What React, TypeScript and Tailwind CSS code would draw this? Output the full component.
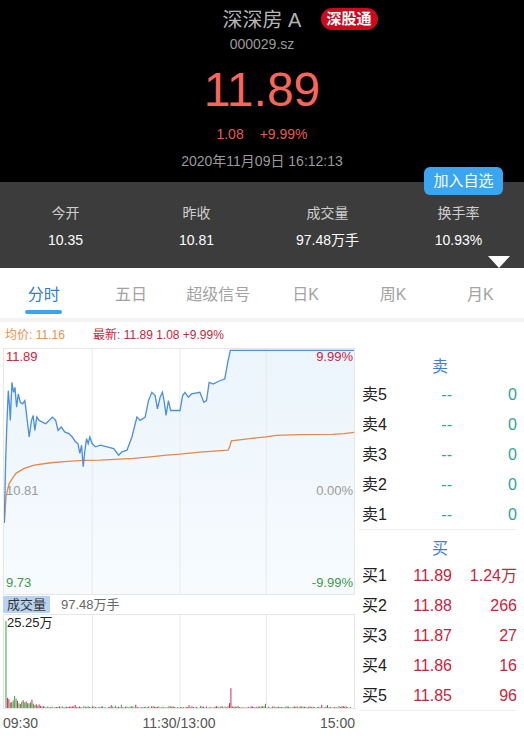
import React from 'react'

const FONT = { fontFamily: '"Liberation Sans", "Noto Sans CJK SC", sans-serif' }

const stats = [
  { label: '今开', value: '10.35' },
  { label: '昨收', value: '10.81' },
  { label: '成交量', value: '97.48万手' },
  { label: '换手率', value: '10.93%' },
]

const tabs = ['分时', '五日', '超级信号', '日K', '周K', '月K']

const sells = ['卖5', '卖4', '卖3', '卖2', '卖1']

const buys = [
  { label: '买1', price: '11.89', vol: '1.24万' },
  { label: '买2', price: '11.88', vol: '266' },
  { label: '买3', price: '11.87', vol: '27' },
  { label: '买4', price: '11.86', vol: '16' },
  { label: '买5', price: '11.85', vol: '96' },
]

// price line traced in 3x coordinates of the chart region
const pricePts: [number, number][] = [
  [10, 610], [14, 420], [18, 300], [22, 210], [26, 260], [28, 300], [33, 185], [36, 205], [38, 215], [42, 200],
  [47, 260], [52, 220], [58, 245], [65, 250], [72, 240], [78, 290], [85, 350], [92, 300], [97, 285],
  [102, 330], [108, 290], [115, 300], [125, 305], [135, 310], [145, 300], [155, 290], [165, 300],
  [172, 330], [182, 320], [192, 335], [205, 340], [215, 350], [225, 365], [232, 370], [238, 400],
  [243, 375], [248, 440], [252, 400], [258, 355], [263, 370], [268, 350], [275, 370], [285, 380],
  [300, 375], [320, 380], [340, 385], [355, 405], [365, 395], [380, 390], [395, 350], [410, 290],
  [420, 300], [435, 290], [445, 240], [455, 215], [465, 225], [472, 265], [480, 230], [487, 215],
  [492, 240], [498, 285], [505, 240], [512, 270], [540, 270], [548, 225], [555, 215], [565, 230],
  [575, 220], [600, 215], [612, 245], [620, 240], [628, 185], [640, 190], [660, 180], [675, 175],
  [685, 120], [692, 88], [1065, 88],
]

const avgPts: [number, number][] = [
  [10, 610], [15, 530], [25, 490], [45, 460], [70, 445], [100, 435], [150, 428], [200, 424],
  [250, 421], [300, 420], [400, 415], [450, 410], [500, 405], [540, 402], [600, 396], [685, 390],
  [690, 380], [695, 362], [750, 355], [800, 350], [830, 345], [900, 343], [1000, 342], [1035, 340],
  [1065, 336],
]

const toPts = (pts: [number, number][]) => pts.map(([x, y]) => `${x},${y}`).join(' ')

// deterministic volume bars
function makeBars() {
  const bars: { x: number; h: number; up: boolean }[] = []
  let seed = 7
  const rnd = () => {
    seed = (seed * 9301 + 49297) % 233280
    return seed / 233280
  }
  for (let i = 0; i < 240; i++) {
    const x = 1.5 + i * 1.45
    let h = rnd() * 1.6 + 0.3
    if (i < 30) h = Math.max(h, (30 - i) * 0.35 * (0.5 + rnd()))
    if (i === 0) h = 88
    if (i === 156) h = 20
    if (i === 155) h = 5
    if (rnd() > 0.93) h += rnd() * 3
    let up = rnd() > 0.45
    if (i === 0) up = false
    if (i === 155 || i === 156) up = true
    bars.push({ x, h, up })
  }
  return bars
}

const bars = makeBars()

export default function App() {
  return (
    <div className="w-[524px] h-[737px] overflow-hidden bg-white" style={FONT}>
      {/* Header */}
      <div className="relative bg-black h-[182px] flex flex-col items-center pt-[8px]">
        <div className="h-[24px] flex items-center relative">
          <span className="text-[20px] leading-[24px] text-[#b4b4b4]">深深房 A</span>
          <span className="absolute left-[98px] top-[0px] h-[22px] px-[6px] rounded-full bg-[#cc0a1e] text-white text-[15px] font-bold leading-[22px] whitespace-nowrap">
            深股通
          </span>
        </div>
        <div className="h-[24px] text-[14px] leading-[24px] text-[#9a9a9a]">000029.sz</div>
        <div className="h-[68px] text-[48px] leading-[68px] text-[#f6665a]">11.89</div>
        <div className="h-[20px] flex gap-[16px] text-[14px] leading-[20px] text-[#e65c4f]">
          <span>1.08</span>
          <span>+9.99%</span>
        </div>
        <div className="mt-[7px] h-[20px] text-[14px] leading-[20px] text-[#9a9a9a]">2020年11月09日 16:12:13</div>
        <button className="absolute right-[21px] top-[167px] w-[79px] h-[28px] rounded-[6px] bg-[#3aa5f1] text-white text-[15px] leading-[28px] z-10">
          加入自选
        </button>
      </div>

      {/* Stats */}
      <div className="relative bg-[#3c3c3c] h-[86px] grid grid-cols-4 pt-[21px]">
        {stats.map((s) => (
          <div key={s.label} className="flex flex-col items-center gap-[7px]">
            <span className="text-[14px] leading-[20px] text-[#cfcfcf]">{s.label}</span>
            <span className="text-[14px] leading-[20px] text-white">{s.value}</span>
          </div>
        ))}
        <div className="absolute right-[14px] bottom-0 w-0 h-0 border-l-[11px] border-r-[11px] border-t-[12px] border-l-transparent border-r-transparent border-t-white" />
      </div>

      {/* Tabs */}
      <div className="grid grid-cols-6 h-[50px] bg-white">
        {tabs.map((t, i) => (
          <div key={t} className="flex flex-col items-center pt-[17px]">
            <span className={`text-[16px] leading-[20px] ${i === 0 ? 'text-[#2f7ed2]' : 'text-[#a3a3a3]'}`}>{t}</span>
            {i === 0 && <span className="mt-[5px] w-[37px] h-[4px] rounded-full bg-[#3aa5f1]" />}
          </div>
        ))}
      </div>
      <div className="h-[4px] bg-[#f3f3f3]" />

      {/* Average line info */}
      <div className="h-[26px] flex items-center pl-[5px] text-[12px] leading-[16px]">
        <span className="text-[#e8904f] w-[88px]">均价: 11.16</span>
        <span className="text-[#c9243d]">最新: 11.89 1.08 +9.99%</span>
      </div>

      <div className="flex">
        {/* Chart column */}
        <div className="w-[356px] pl-[3px] flex flex-col">
          <div className="relative w-[352px] h-[247px] border border-[#e6e6e6]">
            <svg className="absolute inset-0 w-full h-full" viewBox="9 84 1056 741" preserveAspectRatio="none">
              <defs>
                <linearGradient id="pf" x1="0" y1="0" x2="0" y2="1">
                  <stop offset="0" stopColor="#ebf5fc" />
                  <stop offset="1" stopColor="#f7fbfe" />
                </linearGradient>
              </defs>
              <polygon points={`${toPts(pricePts)} 1065,825 10,825`} fill="url(#pf)" />
              {[275, 540, 800].map((x) => (
                <line key={x} x1={x} y1={84} x2={x} y2={825} stroke="#e9e9e9" strokeWidth={3} />
              ))}
              <polyline points={toPts(avgPts)} fill="none" stroke="#e8874a" strokeWidth={4} />
              <polyline points={toPts(pricePts)} fill="none" stroke="#4a8fe0" strokeWidth={4} />
            </svg>
            <span className="absolute left-[2px] top-[0px] text-[13px] leading-[16px] text-[#c9243d]">11.89</span>
            <span className="absolute right-[1px] top-[0px] text-[13px] leading-[16px] text-[#c9243d]">9.99%</span>
            <span className="absolute left-[2px] top-[134px] text-[13px] leading-[16px] text-[#9a9a9a]">10.81</span>
            <span className="absolute right-[1px] top-[134px] text-[13px] leading-[16px] text-[#9a9a9a]">0.00%</span>
            <span className="absolute left-[2px] bottom-[3px] text-[13px] leading-[16px] text-[#3c9b4b]">9.73</span>
            <span className="absolute right-[1px] bottom-[3px] text-[13px] leading-[16px] text-[#3c9b4b]">-9.99%</span>
          </div>

          <div className="h-[19px] flex items-center">
            <span className="h-[17px] px-[4px] bg-[#b8d3f1] text-[13px] leading-[17px] text-[#333]">成交量</span>
            <span className="ml-[11px] text-[13px] leading-[17px] text-[#666]">97.48万手</span>
          </div>

          <div className="relative w-[352px] h-[94px] border-t border-l border-r border-[#e6e6e6]">
            <svg className="absolute inset-0 w-full h-full" viewBox="0 0 352 94" preserveAspectRatio="none">
              {[89, 177, 264].map((x) => (
                <line key={x} x1={x} y1={0} x2={x} y2={94} stroke="#e9e9e9" strokeWidth={1} />
              ))}
              {bars.map((b, i) => (
                <rect key={i} x={b.x} y={94 - b.h} width={1} height={b.h} fill={b.up ? '#e0205a' : '#36a03c'} />
              ))}
            </svg>
            <span className="absolute left-[3px] top-[0px] text-[13px] leading-[16px] text-[#222]">25.25万</span>
          </div>

          <div className="h-[28px] flex items-center justify-between text-[14px] leading-[20px] text-[#555] border-t border-[#e6e6e6]">
            <span>09:30</span>
            <span>11:30/13:00</span>
            <span className="pr-[1px]">15:00</span>
          </div>
        </div>

        {/* Order book */}
        <div className="flex-1 flex flex-col">
          <div className="h-[31px] pt-[9px] text-center text-[16px] leading-[20px] text-[#3d80d2]">卖</div>
          {sells.map((s) => (
            <div key={s} className="h-[30px] flex items-center pl-[6px] pr-[7px] pt-[2px] text-[16px] leading-[20px]">
              <span className="w-[50px] text-[#222]">{s}</span>
              <span className="w-[40px] text-right text-[#2aa892]">--</span>
              <span className="flex-1 text-right text-[#2aa892]">0</span>
            </div>
          ))}
          <div className="h-px bg-[#ececec] ml-[3px] mr-[8px]" />
          <div className="h-[30px] pt-[9px] text-center text-[16px] leading-[20px] text-[#3d80d2]">买</div>
          {buys.map((b) => (
            <div key={b.label} className="h-[30px] flex items-center pl-[6px] pr-[7px] pt-[2px] text-[16px] leading-[20px]">
              <span className="w-[50px] text-[#222]">{b.label}</span>
              <span className="w-[40px] text-right text-[#c9243d]">{b.price}</span>
              <span className="flex-1 text-right text-[#c9243d]">{b.vol}</span>
            </div>
          ))}
          <div className="h-px bg-[#ececec] ml-[3px] mr-[8px]" />
        </div>
      </div>
    </div>
  )
}
